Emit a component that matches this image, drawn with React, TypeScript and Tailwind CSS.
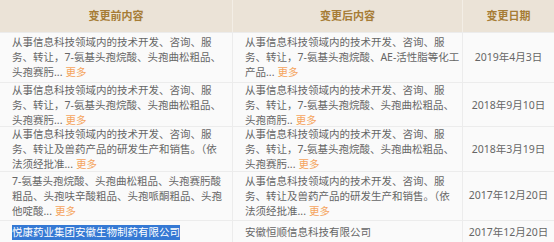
const rows = [
  {
    h: 'h-[50px]',
    before: ['从事信息科技领域内的技术开发、咨询、服', '务、转让，7-氨基头孢烷酸、头孢曲松粗品、', '头孢赛肟...'],
    after: ['从事信息科技领域内的技术开发、咨询、服', '务、转让，7-氨基头孢烷酸、AE-活性脂等化工', '产品...'],
    date: '2019年4月3日',
  },
  {
    h: 'h-[44px]',
    before: ['从事信息科技领域内的技术开发、咨询、服', '务、转让，7-氨基头孢烷酸、头孢曲松粗品、', '头孢赛肟...'],
    after: ['从事信息科技领域内的技术开发、咨询、服', '务、转让，7-氨基头孢烷酸、头孢曲松粗品、', '头孢商肟..'],
    date: '2018年9月10日',
  },
  {
    h: 'h-[45px]',
    before: ['从事信息科技领域内的技术开发、咨询、服', '务、转让及兽药产品的研发生产和销售。（依', '法须经批准...'],
    after: ['从事信息科技领域内的技术开发、咨询、服', '务、转让，7-氨基头孢烷酸、头孢曲松粗品、', '头孢赛肟...'],
    date: '2018年3月19日',
  },
  {
    h: 'h-[49px]',
    before: ['7-氨基头孢烷酸、头孢曲松粗品、头孢赛肟酸', '粗品、头孢呋辛酸粗品、头孢哌酮粗品、头孢', '他啶酸...'],
    after: ['从事信息科技领域内的技术开发、咨询、服', '务、转让及兽药产品的研发生产和销售。（依', '法须经批准...'],
    date: '2017年12月20日',
  },
];

function Lines({ lines }: { lines: string[] }) {
  return (
    <div className="leading-[15px]">
      {lines.map((l, i) => (
        <div key={i} className="whitespace-nowrap">
          {l}
          {i === lines.length - 1 && <span className="ml-[3px] text-[#f5a55e]">更多</span>}
        </div>
      ))}
    </div>
  );
}

export default function App() {
  return (
    <div
      className="w-[554px] h-[242px] overflow-hidden bg-white text-[10.5px] text-[#666]"
      style={{ fontFamily: '"Noto Sans", "Noto Sans CJK SC", sans-serif' }}
    >
      <div className="grid grid-cols-[233px_230px_91px] h-[32px] bg-[#ebe3d7] font-bold text-[#a67c35] text-[11px]">
        <div className="flex items-center justify-center border-r border-[#f3eee6]">变更前内容</div>
        <div className="flex items-center justify-center border-r border-[#f3eee6]">变更后内容</div>
        <div className="flex items-center justify-center">变更日期</div>
      </div>
      {rows.map((r, i) => (
        <div key={i} className={`grid grid-cols-[233px_230px_91px] ${r.h} bg-[#fafafa] border-t border-[#ececec]`}>
          <div className="flex items-center pl-3 border-r border-[#ececec]">
            <Lines lines={r.before} />
          </div>
          <div className="flex items-center pl-3 border-r border-[#ececec]">
            <Lines lines={r.after} />
          </div>
          <div className="flex items-center justify-center">{r.date}</div>
        </div>
      ))}
      <div className="grid grid-cols-[233px_230px_91px] h-[30px] bg-[#fafafa] border-t border-[#ececec]">
        <div className="flex items-start pt-[4px] pl-3 border-r border-[#ececec]">
          <span className="bg-[#3579d4] text-white leading-[15px]">悦康药业集团安徽生物制药有限公司</span>
        </div>
        <div className="flex items-start pt-[4px] pl-3 border-r border-[#ececec] leading-[15px]">安徽恒顺信息科技有限公司</div>
        <div className="flex items-start pt-[4px] justify-center leading-[15px]">2017年12月20日</div>
      </div>
    </div>
  );
}
